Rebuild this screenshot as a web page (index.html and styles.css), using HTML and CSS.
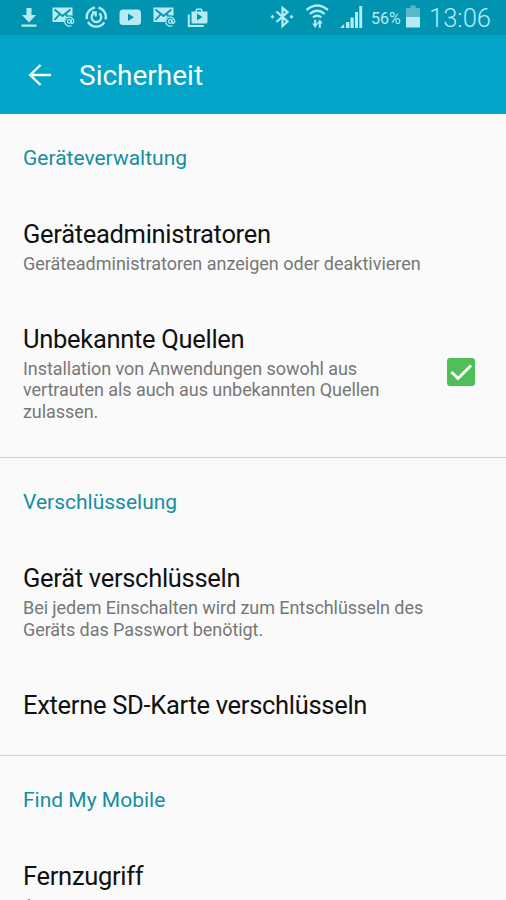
FILE: index.html
```html
<!DOCTYPE html>
<html lang="de">
<head>
<meta charset="utf-8">
<title>Sicherheit</title>
<link rel="stylesheet" href="styles.css">
</head>
<body>
<div class="screen">
  <div class="status">
    <svg class="status-icons" width="187" height="35" viewBox="0 0 187 35" aria-hidden="true">
      <path class="fill" d="M26.500 8h5v7h4.500l-7 7.500-7-7.500h4.500zM21.500 24.500h15v2.200h-15z"/>
      <g id="mail">
        <path class="fill" d="M52.500 7.500h20v8.500c-4-2-8 1-8.300 6h-11.700z"/>
        <path class="cut" d="M54.500 9.500l8 6.500 8-6.500M54.500 20l5-5.500M66 14.500l1.500 1.500"/>
        <circle class="line thin" cx="69.300" cy="21.500" r="1.800"/>
        <path class="line thin" d="M71.200 19.500v3c0 1.500 2.500 1.300 2.500-1.200a4.500 4.500 0 1 0-2.200 4.200"/>
      </g>
      <path class="line ring" d="M98.500 7.600A9.600 9.600 0 0 1 105.500 19.500M104.300 22.300A9.600 9.600 0 0 1 88 21.800M86.900 19.300A9.600 9.600 0 0 1 95 7.600"/>
      <path class="line ring" d="M99.300 13.400a4.800 4.800 0 1 1-5.800 0M92 12.500h3.700v4"/>
      <rect class="fill" x="119.500" y="9.500" width="21.500" height="15.500" rx="3.500"/>
      <path class="bar-fill" d="M128 13.500l6 3.700-6 3.700z"/>
      <use href="#mail" x="101"/>
    </svg>
    <svg class="store-icon" width="21" height="35" viewBox="187 0 21 35" aria-hidden="true">
      <path class="fill" fill-rule="evenodd" d="M191.500 11.500h4V10q0-1.500 1.500-1.500h4q1.500 0 1.500 1.500v1.500h5v10.500q0 1.500-1.500 1.500H193q-1.500 0-1.500-1.500zM197 10v1.500h4V10zM197 13.500v7l5.500-3.500z"/>
      <path class="line" d="M188.800 14.500v11.500h15"/>
    </svg>
    <svg class="signal-icons" width="98" height="35" viewBox="268 0 98 35" aria-hidden="true">
      <path class="line blue" d="M276.500 11.500l11 10-5 4.500V8l5 4-11 10"/>
      <path class="fill" d="M270.500 16.700l2-2 2 2-2 2zM289.500 16.700l2-2 2 2-2 2z"/>
      <path class="line wifi" d="M306.500 10q10.700-9 21.400 0M309.800 13.800q7.400-6 14.800 0M313 17.300q4.200-3.200 8.400 0"/>
      <path class="line" d="M315.200 19.800v5M319.800 22v5.800"/>
      <path class="fill" d="M312.300 23.500h5.800l-2.900 4.500zM316.900 23.500h5.800l-2.900-4z"/>
      <path class="fill" d="M340 28l4.200-4v4zM346 22h3.400v6H346zM350.500 17.500h3.200v10.500h-3.200zM355 12h3v16h-3zM359.300 6h2.900v22h-2.900z"/>
    </svg>
    <span class="percent">56%</span>
    <svg class="battery" width="15" height="35" viewBox="406 0 15 35" aria-hidden="true">
      <path class="faded" d="M410.500 5.500h5V8h4.500v9h-14V8h4.500z"/>
      <path class="fill" d="M406 17h14v10.500h-14z"/>
    </svg>
    <span class="clock">13:06</span>
  </div>
  <header class="appbar">
    <svg class="back" width="24" height="24" viewBox="0 0 24 24" aria-hidden="true"><path d="M12.500 2L2.200 12l10.300 10M2.500 12H23"/></svg>
    <h1>Sicherheit</h1>
  </header>
  <main>
    <section class="first">
      <h2>Geräteverwaltung</h2>
      <div class="row"><h3>Geräteadministratoren</h3><p>Geräteadministratoren anzeigen oder deaktivieren</p></div>
      <div class="row unknown">
        <div><h3>Unbekannte Quellen</h3><p class="tight">Installation von Anwendungen sowohl aus<br>vertrauten als auch aus unbekannten Quellen<br>zulassen.</p></div>
        <svg class="check" width="28" height="28" viewBox="0 0 28 28" aria-hidden="true"><rect width="28" height="28" rx="3"/><path d="M4.500 14l6.500 6.500L24 7.500"/></svg>
      </div>
    </section>
    <section class="second">
      <h2>Verschlüsselung</h2>
      <div class="row"><h3>Gerät verschlüsseln</h3><p class="tight">Bei jedem Einschalten wird zum Entschlüsseln des<br>Geräts das Passwort benötigt.</p></div>
      <div class="row sd"><h3>Externe SD-Karte verschlüsseln</h3></div>
    </section>
    <section class="third">
      <h2>Find My Mobile</h2>
      <div class="row"><h3>Fernzugriff</h3><p>A</p></div>
    </section>
  </main>
</div>
</body>
</html>
```
FILE: styles.css
```css
* { box-sizing: border-box; }
body { margin: 0; font-family: Roboto, sans-serif; background: #fafafa; }
h1, h2, h3, p { margin: 0; font-weight: 400; white-space: nowrap; }
.screen { width: 506px; height: 900px; overflow: hidden; }
.status { display: flex; height: 35px; background: #0194b0; color: #b7ebf4; }
.status svg { flex: none; }
.signal-icons { margin-left: 60px; }
.fill { fill: #b7ebf4; }
.bar-fill { fill: #0194b0; }
.faded { fill: #58b9cb; }
.line { fill: none; stroke: #b7ebf4; stroke-width: 2; }
.thin { stroke-width: 1.3; }
.ring, .wifi, .blue { stroke-width: 2.3; }
.cut { fill: none; stroke: #0194b0; stroke-width: 1.8; }
.percent { width: 40px; padding-left: 5px; font-size: 16px; line-height: 37px; }
.clock { margin-left: 8px; font-size: 25.5px; line-height: 37px; font-weight: 300; }
.appbar { display: flex; align-items: center; height: 79px; padding-left: 28px; background: #02a5c7; color: #f4fdff; }
.back { fill: none; stroke: #f4fdff; stroke-width: 2.4; }
h1 { margin-left: 27px; padding-top: 2px; font-size: 28px; line-height: 38px; }
section { padding-left: 23px; }
.first { height: 344px; border-bottom: 1px solid #d0d0d0; padding-top: 29px; }
.second { height: 298px; border-bottom: 1px solid #d0d0d0; padding-top: 29px; }
.third { padding-top: 29px; }
h2 { font-size: 21px; line-height: 30px; color: #158e9f; }
.row { padding-top: 45px; }
h3 { font-size: 25.5px; line-height: 32px; color: #111; letter-spacing: -0.3px; }
p { font-size: 18px; line-height: 21.5px; color: #777; padding-top: 3px; }
.tight { letter-spacing: -0.06px; }
.unknown { display: flex; justify-content: space-between; padding-right: 31px; padding-top: 48px; }
.sd { padding-top: 49px; }
.check { margin-top: 35px; }
.check rect { fill: #50bf57; }
.check path { fill: none; stroke: #fff; stroke-width: 3; }
```
